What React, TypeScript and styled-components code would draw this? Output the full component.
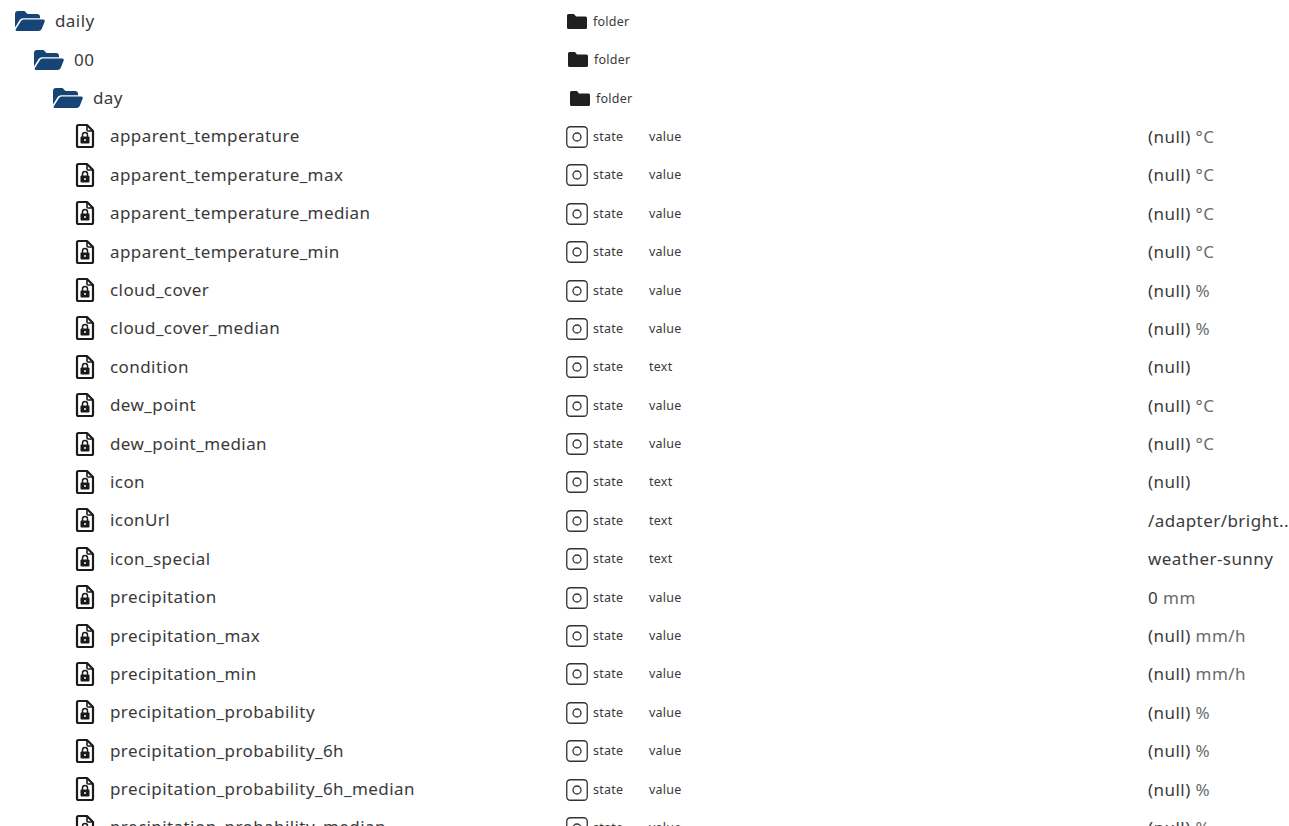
import { FC } from 'react'
import styled, { createGlobalStyle } from 'styled-components'

const GlobalStyle = createGlobalStyle`
  html, body {
    margin: 0;
    height: 100%;
    overflow: hidden;
    background: #fff;
  }
  body {
    font-family: 'Noto Sans', 'Open Sans', sans-serif;
    color: #323130;
  }
`

type Item = { name: string; type: string; value?: string; unit?: string }

const folders = [
  { name: 'daily', level: 0, typeOffset: 0 },
  { name: '00', level: 1, typeOffset: 1 },
  { name: 'day', level: 2, typeOffset: 3 },
]

const items: Item[] = [
  { name: 'apparent_temperature', type: 'value', value: '(null)', unit: '°C' },
  { name: 'apparent_temperature_max', type: 'value', value: '(null)', unit: '°C' },
  { name: 'apparent_temperature_median', type: 'value', value: '(null)', unit: '°C' },
  { name: 'apparent_temperature_min', type: 'value', value: '(null)', unit: '°C' },
  { name: 'cloud_cover', type: 'value', value: '(null)', unit: '%' },
  { name: 'cloud_cover_median', type: 'value', value: '(null)', unit: '%' },
  { name: 'condition', type: 'text', value: '(null)' },
  { name: 'dew_point', type: 'value', value: '(null)', unit: '°C' },
  { name: 'dew_point_median', type: 'value', value: '(null)', unit: '°C' },
  { name: 'icon', type: 'text', value: '(null)' },
  { name: 'iconUrl', type: 'text', value: '/adapter/bright..' },
  { name: 'icon_special', type: 'text', value: 'weather-sunny' },
  { name: 'precipitation', type: 'value', value: '0', unit: 'mm' },
  { name: 'precipitation_max', type: 'value', value: '(null)', unit: 'mm/h' },
  { name: 'precipitation_min', type: 'value', value: '(null)', unit: 'mm/h' },
  { name: 'precipitation_probability', type: 'value', value: '(null)', unit: '%' },
  { name: 'precipitation_probability_6h', type: 'value', value: '(null)', unit: '%' },
  { name: 'precipitation_probability_6h_median', type: 'value', value: '(null)', unit: '%' },
  { name: 'precipitation_probability_median', type: 'value', value: '(null)', unit: '%' },
]

const Icon = styled.svg`
  flex: none;
  display: block;
`

const StateSvg = styled(Icon)`
  margin-top: 1px;
`

const OpenFolderIcon: FC = () => (
  <Icon width="30" height="20" viewBox="0 0 30 20" fill="#164477">
    <path d="M0 3a3 3 0 0 1 3-3h6.500l3 3H22a3 3 0 0 1 3 3v1.200H8.500a5 5 0 0 0-4.600 3L0 16.500z" />
    <path d="M6 10a3 3 0 0 1 2.700-1.500h19.600a1.500 1.500 0 0 1 1.400 2.100l-3 7.300a3.500 3.500 0 0 1-3.200 2.100H2a1.300 1.300 0 0 1-1.200-1.800z" />
  </Icon>
)

const ClosedFolderIcon: FC = () => (
  <Icon width="20" height="15" viewBox="0 0 20 15" fill="#202020">
    <path d="M0 1.500A1.500 1.500 0 0 1 1.500 0H7l2 2.500h9.500A1.500 1.500 0 0 1 20 4v9.500a1.500 1.500 0 0 1-1.500 1.500h-17A1.500 1.500 0 0 1 0 13.500z" />
  </Icon>
)

const FileLockIcon: FC = () => (
  <Icon width="20" height="26" viewBox="0 0 20 26" fill="none">
    <path
      d="M3.500 2h8.500l6 6v14.500a1.500 1.500 0 0 1-1.500 1.500h-13A1.500 1.500 0 0 1 2 22.500v-19A1.500 1.500 0 0 1 3.500 2z"
      stroke="#1a1a1a"
      strokeWidth="2.200"
      strokeLinejoin="round"
    />
    <path d="M12 2v5a1 1 0 0 0 1 1h5" stroke="#1a1a1a" strokeWidth="1.600" />
    <rect x="5.500" y="13.500" width="9" height="7" rx="1" fill="#1a1a1a" />
    <path d="M7.500 14v-2a2.500 2.500 0 0 1 5 0v2" stroke="#1a1a1a" strokeWidth="1.500" />
    <circle cx="10" cy="17" r="1" fill="#fff" />
  </Icon>
)

const StateIcon: FC = () => (
  <StateSvg width="22" height="22" viewBox="0 0 22 22" fill="none">
    <rect x="0.750" y="0.750" width="20.500" height="20.500" rx="3.500" stroke="#333" strokeWidth="1.300" />
    <circle cx="11" cy="11" r="4" stroke="#333" strokeWidth="1.300" />
  </StateSvg>
)

const App: FC = () => (
  <>
    <GlobalStyle />
    <Tree>
      {folders.map((f) => (
        <Row key={f.name}>
          <FolderName $level={f.level}>
            <OpenFolderIcon />
            <Label>{f.name}</Label>
          </FolderName>
          <TypeCell $offset={f.typeOffset}>
            <FolderIconSlot>
              <ClosedFolderIcon />
            </FolderIconSlot>
            <Small>folder</Small>
          </TypeCell>
        </Row>
      ))}
      {items.map((item) => (
        <Row key={item.name}>
          <StateName>
            <FileLockIcon />
            <Label>{item.name}</Label>
          </StateName>
          <TypeCell $offset={0}>
            <StateIcon />
            <RoleText>state</RoleText>
            <Small>{item.type}</Small>
          </TypeCell>
          <ValueCell>
            {item.value}
            {item.unit && <Unit> {item.unit}</Unit>}
          </ValueCell>
        </Row>
      ))}
    </Tree>
  </>
)

export default App

const Tree = styled.div`
  height: 826px;
  box-sizing: border-box;
  overflow: hidden;
  padding-top: 2.1px;
`

const Row = styled.div`
  display: flex;
  align-items: center;
  height: 38.4px;
`

const FolderName = styled.div<{ $level: number }>`
  width: 566px;
  box-sizing: border-box;
  flex: none;
  display: flex;
  align-items: center;
  gap: 10px;
  padding-left: ${(p) => 15 + p.$level * 19}px;
`

const StateName = styled.div`
  width: 566px;
  box-sizing: border-box;
  flex: none;
  display: flex;
  align-items: center;
  gap: 15px;
  padding-left: 75px;
`

const FolderIconSlot = styled.span`
  display: flex;
  margin: 0 6px 0 1px;
`

const Label = styled.span`
  font-size: 17px;
  letter-spacing: 0.42px;
  line-height: 24px;
  color: #3a3a3a;
  white-space: nowrap;
`

const TypeCell = styled.div<{ $offset: number }>`
  width: 582px;
  flex: none;
  display: flex;
  align-items: center;
  padding-left: ${(p) => p.$offset}px;
  box-sizing: border-box;
`

const Small = styled.span`
  font-size: 12.5px;
  letter-spacing: 0.25px;
  color: #3a3a3a;
`

const RoleText = styled(Small)`
  width: 56px;
  margin-left: 5px;
`

const ValueCell = styled.div`
  font-size: 17px;
  letter-spacing: 0.45px;
  color: #3a3a3a;
  white-space: nowrap;
`

const Unit = styled.span`
  color: #6b6b6b;
`
